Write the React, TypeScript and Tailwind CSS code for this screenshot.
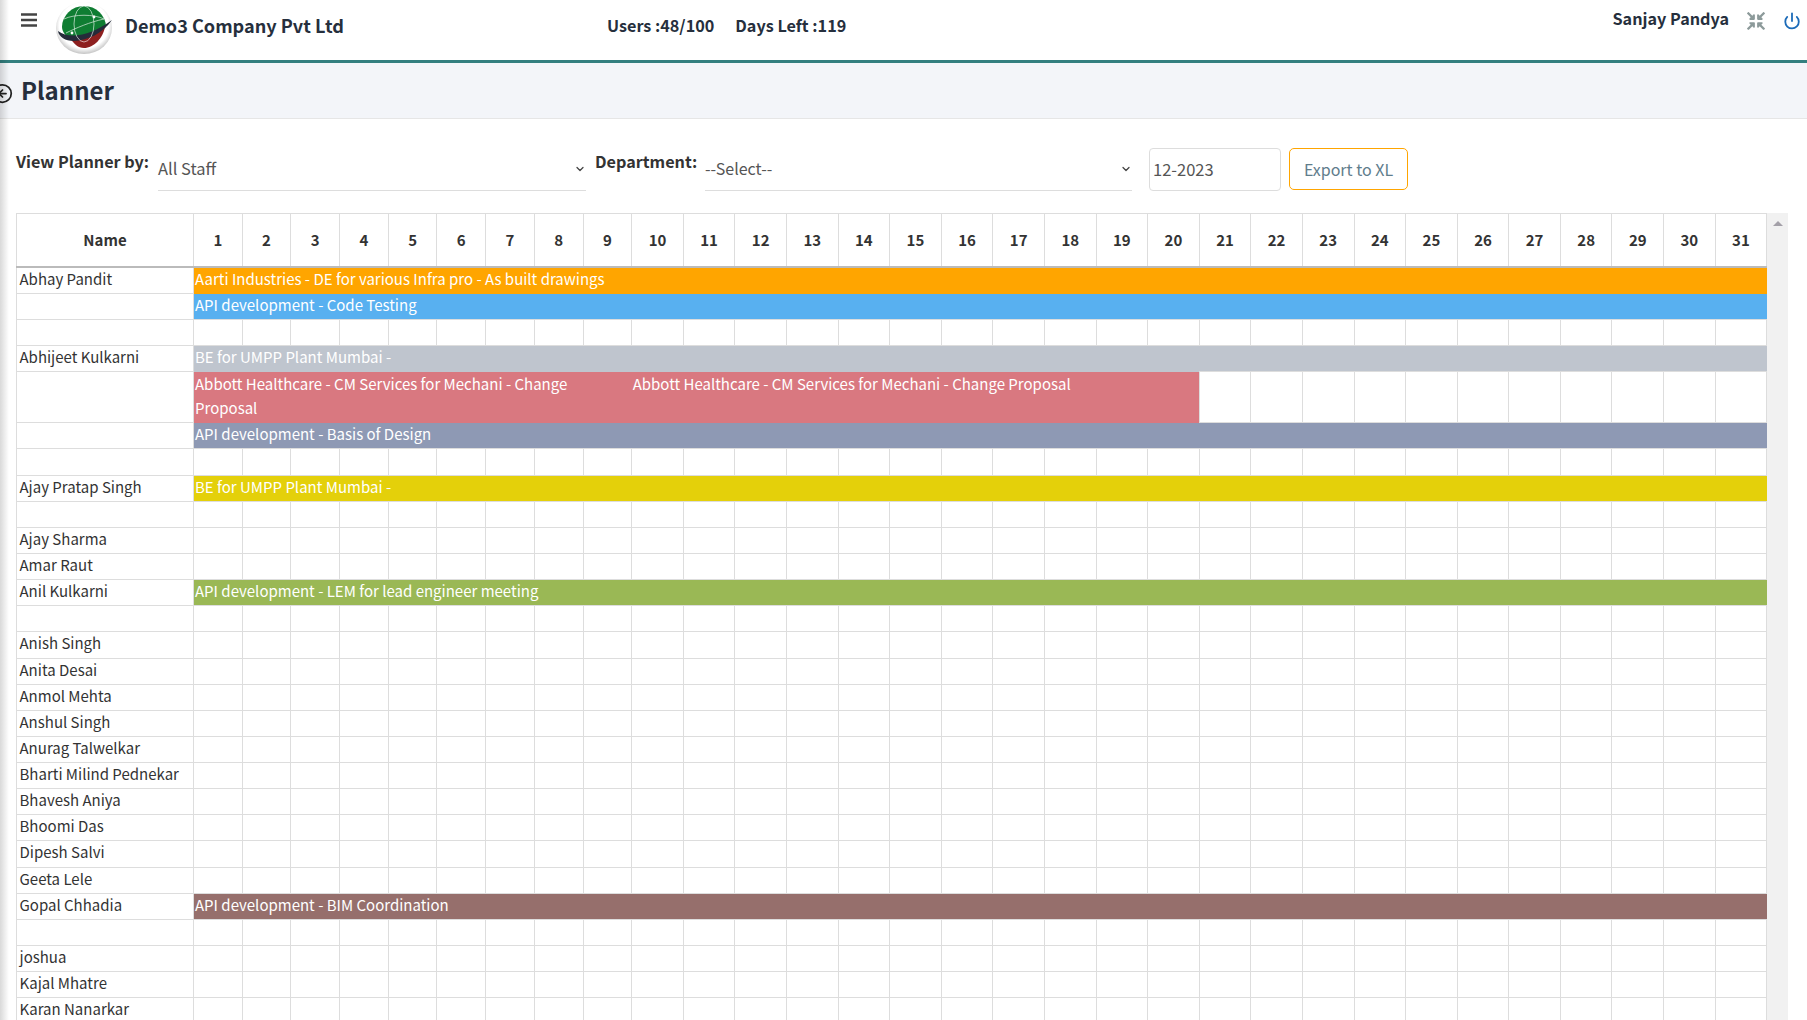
import { ChevronDown, CircleArrowLeft, Power } from "lucide-react";
import { FaCompressArrowsAlt } from "react-icons/fa";

const days = Array.from({ length: 31 }, (_, i) => i + 1);

type Bar = { text: string; color: string; span?: number; second?: string };
type Row = { name: string; bar?: Bar; tall?: boolean };

const rows: Row[] = [
  { name: "Abhay Pandit", tall: true, bar: { text: "Aarti Industries - DE for various Infra pro - As built drawings", color: "bg-[#ffa500]" } },
  { name: "", bar: { text: "API development - Code Testing", color: "bg-[#58b0f0]" } },
  { name: "" },
  { name: "Abhijeet Kulkarni", bar: { text: "BE for UMPP Plant Mumbai -", color: "bg-[#bfc5ce]" } },
  {
    name: "",
    bar: {
      text: "Abbott Healthcare - CM Services for Mechani - Change Proposal",
      second: "Abbott Healthcare - CM Services for Mechani - Change Proposal",
      color: "bg-[#d97880]",
      span: 9,
    },
  },
  { name: "", bar: { text: "API development - Basis of Design", color: "bg-[#8e99b4]" } },
  { name: "", tall: true },
  { name: "Ajay Pratap Singh", bar: { text: "BE for UMPP Plant Mumbai -", color: "bg-[#e4d00a]" } },
  { name: "" },
  { name: "Ajay Sharma" },
  { name: "Amar Raut" },
  { name: "Anil Kulkarni", bar: { text: "API development - LEM for lead engineer meeting", color: "bg-[#9ab855]" } },
  { name: "" },
  { name: "Anish Singh", tall: true },
  { name: "Anita Desai" },
  { name: "Anmol Mehta" },
  { name: "Anshul Singh" },
  { name: "Anurag Talwelkar" },
  { name: "Bharti Milind Pednekar" },
  { name: "Bhavesh Aniya" },
  { name: "Bhoomi Das" },
  { name: "Dipesh Salvi", tall: true },
  { name: "Geeta Lele" },
  { name: "Gopal Chhadia", bar: { text: "API development - BIM Coordination", color: "bg-[#966f6c]" } },
  { name: "" },
  { name: "joshua" },
  { name: "Kajal Mhatre" },
  { name: "Karan Nanarkar" },
];

function Logo() {
  return (
    <svg width="62" height="56" viewBox="-2 -1 62 56">
      <defs>
        <radialGradient id="halo" cx="50%" cy="45%" r="55%">
          <stop offset="80%" stopColor="#ffffff" />
          <stop offset="100%" stopColor="#c4c4c4" />
        </radialGradient>
      </defs>
      <ellipse cx="29" cy="26" rx="28" ry="26" fill="url(#halo)" />
      <path d="M7 25a22 21 0 0 1 44 0c-8 6-19 11-35 13C11 34 7 30 7 25z" fill="#0f7d32" />
      <path d="M15 36c14 0 28-6 35-11-2 11-11 21-21 21-6 0-10-4-14-10z" fill="#8d1f1f" />
      <path d="M3 29c12 9 34 4 54-11-10 14-24 20-38 21C10 39 4 35 3 29z" fill="#252b3a" />
      <g stroke="#ffffff" strokeWidth="0.7" fill="none" opacity="0.85">
        <ellipse cx="29" cy="22" rx="10" ry="18" />
        <path d="M9 17c10-5 30-5 40 0M11 31c10-5 24-11 38-14" />
      </g>
      <circle cx="39" cy="15" r="1.4" fill="#fff" />
      <circle cx="17" cy="31" r="1.4" fill="#fff" />
    </svg>
  );
}

function Select({ value, width, size }: { value: string; width: string; size: string }) {
  return (
    <div className={`${width} ${size} h-[43px] pb-[2px] border-b border-[#ddd] flex items-center justify-between text-[#555]`}>
      <span>{value}</span>
      <ChevronDown size={12} strokeWidth={2.5} className="text-[#444] mt-px" />
    </div>
  );
}

export default function App() {
  return (
    <div className="relative h-screen overflow-hidden bg-white text-[16.2px] leading-[25px] text-[#333] font-['Noto_Sans_CJK_SC','Noto_Sans',sans-serif]">
      <div className="absolute inset-y-0 left-0 w-[9px] bg-gradient-to-r from-black/15 to-transparent pointer-events-none z-10" />

      {/* Top bar */}
      <header className="h-[63px] border-b-[3px] border-[#337f7f] flex text-[#262f3d] font-semibold">
        <svg width="16" height="14" viewBox="0 0 16 14" className="ml-[21px] mt-[13px] text-[#444]">
          <path d="M0 1.5h16M0 7h16M0 12.5h16" stroke="currentColor" strokeWidth="2.4" />
        </svg>
        <div className="ml-[16px] mt-px">
          <Logo />
        </div>
        <div className="ml-[10px] mt-[11px] text-[18.1px] leading-[28px] w-[482px]">Demo3 Company Pvt Ltd</div>
        <div className="mt-[13px]">Users :48/100</div>
        <div className="ml-[21px] mt-[13px]">Days Left :119</div>
        <div className="ml-auto flex items-start">
          <div className="mt-[6px]">Sanjay Pandya</div>
          <FaCompressArrowsAlt size={18} className="ml-[18px] mt-[12px] text-[#8c9a9a]" />
          <Power size={18} strokeWidth={2.4} className="ml-[18px] mr-[6px] mt-[12px] text-[#1c6bb8]" />
        </div>
      </header>

      {/* Title */}
      <div className="h-[56px] bg-[#f3f5f9] border-b border-[#e6e6e6] flex items-center text-[#262f3d]">
        <CircleArrowLeft size={21} strokeWidth={2} className="-ml-[8px] mt-[5px] text-[#222]" />
        <h1 className="ml-[8px] text-[24px] leading-[36px] font-semibold -mt-[2px]">Planner</h1>
      </div>

      {/* Filters */}
      <div className="flex items-start pl-[16px] pt-[29px] h-[94px]">
        <div className="font-semibold mt-px w-[142px]">View Planner by:</div>
        <Select value="All Staff" width="w-[428px]" size="text-[16.5px]" />
        <div className="font-semibold mt-px ml-[9px] w-[110px]">Department:</div>
        <Select value="--Select--" width="w-[427px]" size="text-[16px]" />
        <div className="ml-[17px] w-[132px] h-[43px] border border-[#ddd] rounded flex items-center pl-[3px] text-[16.5px] text-[#555]">12-2023</div>
        <div className="ml-[8px] w-[119px] h-[42px] border border-[#ffa500] rounded-[5px] flex items-center justify-center text-[16px] text-[#5f7d8c]">Export to XL</div>
      </div>

      {/* Planner grid */}
      <div className="flex items-start pl-[16px]">
        <table className="table-fixed border-collapse w-[1751px] shrink-0 text-[15px] leading-[22px]">
          <colgroup>
            <col className="w-[177px]" />
            {days.map((d) => (
              <col key={d} className={d < 10 ? "w-[48.7px]" : "w-[51.6px]"} />
            ))}
          </colgroup>
          <thead>
            <tr className="h-[53px]">
              <th className="border border-[#ddd] border-b-2 border-b-[#bbb] font-semibold">Name</th>
              {days.map((d) => (
                <th key={d} className="border border-[#ddd] border-b-2 border-b-[#bbb] font-semibold">{d}</th>
              ))}
            </tr>
          </thead>
          <tbody>
            {rows.map((row, i) => {
              const bar = row.bar;
              return (
                <tr key={i} className={bar?.span ? "h-[51px]" : row.tall ? "h-[27px]" : "h-[26px]"}>
                  <td className="border border-[#ddd] pl-[2.5px] p-0 align-top whitespace-nowrap">{row.name}</td>
                  {bar && bar.span ? (
                    <>
                      <td colSpan={bar.span} className={`${bar.color} text-white leading-[24.5px] px-px py-0 align-top`}>{bar.text}</td>
                      <td colSpan={11} className={`${bar.color} text-white leading-[24.5px] px-px py-0 align-top`}>{bar.second}</td>
                      {days.slice(20).map((d) => (
                        <td key={d} className="border border-[#ddd] p-0" />
                      ))}
                    </>
                  ) : bar ? (
                    <td colSpan={31} className={`${bar.color} text-white px-px py-0 align-top`}>{bar.text}</td>
                  ) : (
                    days.map((d) => <td key={d} className="border border-[#ddd] p-0" />)
                  )}
                </tr>
              );
            })}
          </tbody>
        </table>
        <div className="w-[21px] h-[900px] shrink-0 bg-[#f1f1f1] flex justify-center pt-[8px]">
          <div className="w-0 h-0 border-x-[5px] border-x-transparent border-b-[5px] border-b-[#a3a0a8]" />
        </div>
      </div>
    </div>
  );
}
